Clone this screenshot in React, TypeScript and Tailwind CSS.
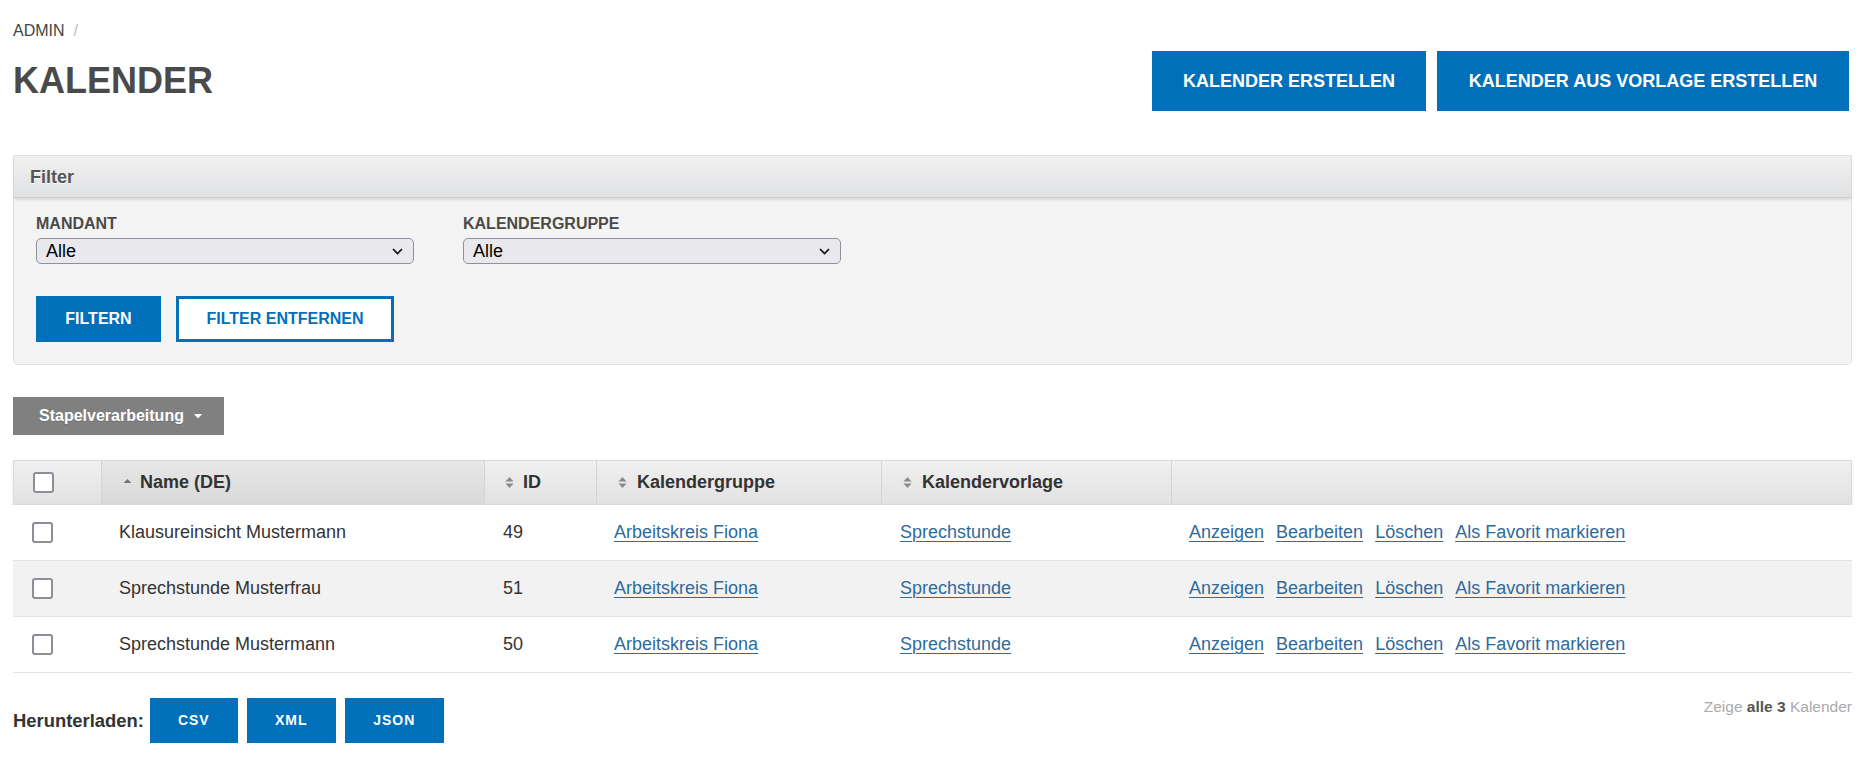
import React from "react";

function SortBoth() {
  return (
    <svg width="9" height="13" viewBox="0 0 9 13" className="shrink-0">
      <path d="M0.5 5.5 L4.5 1 L8.5 5.5 Z" fill="#8a8a8a" />
      <path d="M0.5 7.5 L4.5 12 L8.5 7.5 Z" fill="#8a8a8a" />
    </svg>
  );
}

function SortAsc() {
  return (
    <svg width="9" height="13" viewBox="0 0 9 13" className="shrink-0">
      <path d="M0.5 7 L4.5 3 L8.5 7 Z" fill="#777" />
    </svg>
  );
}

function Checkbox() {
  return <div className="h-[21px] w-[21px] rounded-[3px] border-2 border-[#8e8e99] bg-white" />;
}

function Select() {
  return (
    <div className="flex h-[26px] w-[378px] items-center justify-between rounded-[5px] border border-[#8f8f9d] bg-[#e9e9ed] pl-[9px] pr-[10px] text-[18px] leading-[20px] text-black">
      <span>Alle</span>
      <svg width="11" height="7" viewBox="0 0 11 7">
        <path d="M1 1 L5.5 5.5 L10 1" fill="none" stroke="#111" strokeWidth="1.7" />
      </svg>
    </div>
  );
}

const rows = [
  { name: "Klausureinsicht Mustermann", id: "49" },
  { name: "Sprechstunde Musterfrau", id: "51" },
  { name: "Sprechstunde Mustermann", id: "50" },
];

const linkCls = "text-[#2f6a9c] underline underline-offset-[3px] decoration-[1px]";

export default function App() {
  return (
    <div className="min-h-screen bg-white pl-[13px] pr-[24px] pt-[22px] font-['Liberation_Sans',Arial,sans-serif] text-[#333]">
      {/* breadcrumb */}
      <div className="flex h-[18px] items-center gap-[9px] text-[16px] leading-[18px] text-[#444]">
        <span>ADMIN</span>
        <span className="text-[#bbb]">/</span>
      </div>

      {/* title row */}
      <div className="mt-[11px] flex h-[60px] items-center justify-between">
        <h1 className="text-[36px] font-bold leading-[36px] text-[#4a4a4a]">KALENDER</h1>
        <div className="mr-[3px] flex gap-[11px]">
          <button className="h-[60px] w-[274px] bg-[#0070ba] text-[18px] font-bold text-white">
            KALENDER ERSTELLEN
          </button>
          <button className="h-[60px] w-[412px] bg-[#0070ba] text-[18px] font-bold text-white">
            KALENDER AUS VORLAGE ERSTELLEN
          </button>
        </div>
      </div>

      {/* filter box */}
      <div className="mt-[44px] rounded-b-[5px] border border-[#e1e1e1] bg-[#f4f4f4]">
        <div className="flex h-[42px] items-center border-b border-[#c9c9c9] bg-gradient-to-b from-[#f0f0f0] to-[#e1e2e4] pl-[16px] shadow-[0_2px_3px_rgba(0,0,0,0.10)]">
          <span className="pt-[2px] text-[18px] font-bold text-[#555] [text-shadow:0_1px_0_#fff]">Filter</span>
        </div>
        <div className="pb-[22px] pl-[22px] pt-[17px]">
          <div className="flex gap-[49px]">
            <div>
              <div className="h-[18px] text-[16px] font-bold leading-[18px] text-[#4a4a4a]">MANDANT</div>
              <div className="mt-[5px]">
                <Select />
              </div>
            </div>
            <div>
              <div className="h-[18px] text-[16px] font-bold leading-[18px] text-[#4a4a4a]">KALENDERGRUPPE</div>
              <div className="mt-[5px]">
                <Select />
              </div>
            </div>
          </div>
          <div className="mt-[32px] flex gap-[15px]">
            <button className="h-[46px] w-[125px] bg-[#0070ba] text-[16px] font-bold text-white">FILTERN</button>
            <button className="h-[46px] w-[218px] border-[3px] border-[#0070ba] bg-white text-[16px] font-bold text-[#0070ba]">
              FILTER ENTFERNEN
            </button>
          </div>
        </div>
      </div>

      {/* batch */}
      <button className="mt-[32px] flex h-[38px] w-[211px] items-center bg-[#808080] pl-[26px] text-[16px] font-bold text-white [text-shadow:0_1px_0_rgba(0,0,0,0.15)]">
        Stapelverarbeitung
        <svg width="8" height="5" viewBox="0 0 8 5" className="ml-[10px]">
          <path d="M0 0 L8 0 L4 4.5 Z" fill="#fff" />
        </svg>
      </button>

      {/* table */}
      <div className="mt-[25px]">
        <div className="grid h-[45px] grid-cols-[87px_383px_112px_285px_290px_1fr] border border-[#dadada] bg-gradient-to-b from-[#f0f0f0] to-[#e2e2e2] text-[18px] font-bold text-[#333] shadow-[0_2px_3px_rgba(0,0,0,0.10)]">
          <div className="flex items-center pl-[19px]">
            <Checkbox />
          </div>
          <div className="flex items-center gap-[8px] border-l border-[#d4d4d4] bg-gradient-to-b from-[#e7e7e7] to-[#d9d9d9] pl-[21px]">
            <SortAsc />
            <span>Name (DE)</span>
          </div>
          <div className="flex items-center gap-[9px] border-l border-[#d4d4d4] pl-[20px]">
            <SortBoth />
            <span>ID</span>
          </div>
          <div className="flex items-center gap-[10px] border-l border-[#d4d4d4] pl-[21px]">
            <SortBoth />
            <span>Kalendergruppe</span>
          </div>
          <div className="flex items-center gap-[10px] border-l border-[#d4d4d4] pl-[21px]">
            <SortBoth />
            <span>Kalendervorlage</span>
          </div>
          <div className="border-l border-[#d4d4d4]" />
        </div>
        {rows.map((r, i) => (
          <div
            key={r.id}
            className={
              "grid h-[56px] grid-cols-[87px_383px_112px_285px_290px_1fr] items-center border-b border-[#e4e4e4] text-[18px] text-[#333] " +
              (i === 1 ? "bg-[#f2f2f2]" : "bg-white")
            }
          >
            <div className="pl-[19px]">
              <Checkbox />
            </div>
            <div className="pl-[19px]">{r.name}</div>
            <div className="pl-[20px]">{r.id}</div>
            <div className="pl-[19px]">
              <a className={linkCls}>Arbeitskreis Fiona</a>
            </div>
            <div className="pl-[20px]">
              <a className={linkCls}>Sprechstunde</a>
            </div>
            <div className="flex gap-[12px] pl-[19px]">
              <a className={linkCls}>Anzeigen</a>
              <a className={linkCls}>Bearbeiten</a>
              <a className={linkCls}>Löschen</a>
              <a className={linkCls}>Als Favorit markieren</a>
            </div>
          </div>
        ))}
      </div>

      {/* footer */}
      <div className="mt-[25px] flex items-start justify-between">
        <div className="flex h-[45px] items-center">
          <span className="text-[18.4px] font-bold text-[#333]">Herunterladen:</span>
          <div className="ml-[6px] flex gap-[9px]">
            <button className="h-[45px] w-[88px] bg-[#0070ba] text-[14px] font-bold tracking-[1px] text-white">CSV</button>
            <button className="h-[45px] w-[89px] bg-[#0070ba] text-[14px] font-bold tracking-[1px] text-white">XML</button>
            <button className="h-[45px] w-[99px] bg-[#0070ba] text-[14px] font-bold tracking-[1px] text-white">JSON</button>
          </div>
        </div>
        <div className="text-[15.5px] leading-[18px] text-[#aaa]">
          Zeige <span className="font-bold text-[#555]">alle 3</span> Kalender
        </div>
      </div>
    </div>
  );
}
